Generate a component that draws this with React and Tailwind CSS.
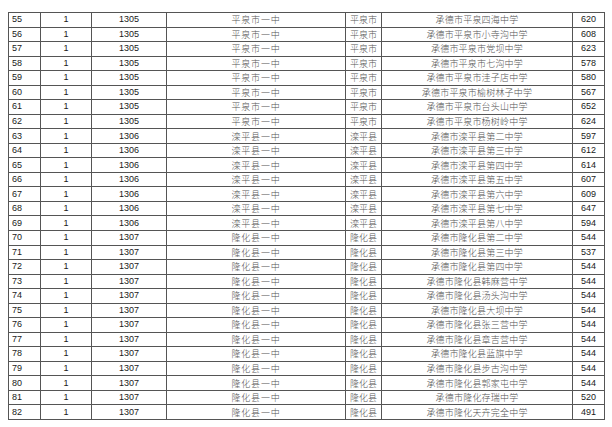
const groups = [
  { code: '1305', school: '平泉市一中', area: '平泉市', start: 55, rows: [
    ['承德市平泉四海中学', 620],
    ['承德市平泉市小寺沟中学', 608],
    ['承德市平泉市党坝中学', 623],
    ['承德市平泉市七沟中学', 578],
    ['承德市平泉市洼子店中学', 580],
    ['承德市平泉市榆树林子中学', 567],
    ['承德市平泉市台头山中学', 652],
    ['承德市平泉市杨树岭中学', 624],
  ] },
  { code: '1306', school: '滦平县一中', area: '滦平县', start: 63, rows: [
    ['承德市滦平县第二中学', 597],
    ['承德市滦平县第三中学', 612],
    ['承德市滦平县第四中学', 614],
    ['承德市滦平县第五中学', 607],
    ['承德市滦平县第六中学', 609],
    ['承德市滦平县第七中学', 647],
    ['承德市滦平县第八中学', 594],
  ] },
  { code: '1307', school: '隆化县一中', area: '隆化县', start: 70, rows: [
    ['承德市隆化县第二中学', 544],
    ['承德市隆化县第三中学', 537],
    ['承德市隆化县第四中学', 544],
    ['承德市隆化县韩麻营中学', 544],
    ['承德市隆化县汤头沟中学', 544],
    ['承德市隆化县大坝中学', 544],
    ['承德市隆化县张三营中学', 544],
    ['承德市隆化县章吉营中学', 544],
    ['承德市隆化县蓝旗中学', 544],
    ['承德市隆化县步古沟中学', 544],
    ['承德市隆化县郭家屯中学', 544],
    ['承德市隆化存瑞中学', 520],
    ['承德市隆化天卉完全中学', 491],
  ] },
];

const rows = groups.flatMap(g =>
  g.rows.map((r, i) => ({ no: g.start + i, code: g.code, school: g.school, area: g.area, mid: r[0], score: r[1] }))
);

const num = "font-['Liberation_Sans',sans-serif] text-[9px] text-[#1a1a1a]";
const cjk = "font-['Noto_Sans_CJK_SC',sans-serif] font-light text-[9px] text-[#555]";
const cell = 'border border-[#555] p-0 leading-none';

export default function App() {
  return (
    <div className="w-[612px] h-[427px] bg-white pt-[12px] pl-[8px]">
      <table className="border-collapse table-fixed w-[596px]">
        <colgroup>
          <col className="w-[32px]" />
          <col className="w-[51px]" />
          <col className="w-[75px]" />
          <col className="w-[179px]" />
          <col className="w-[36px]" />
          <col className="w-[191px]" />
          <col className="w-[32px]" />
        </colgroup>
        <tbody>
          {rows.map(r => (
            <tr key={r.no} className="h-[14.54px]">
              <td className={`${cell} ${num} text-left pl-[3px]`}>{r.no}</td>
              <td className={`${cell} ${num} text-center`}>1</td>
              <td className={`${cell} ${num} text-center`}>{r.code}</td>
              <td className={`${cell} ${cjk} text-center tracking-[0.8px]`}>{r.school}</td>
              <td className={`${cell} ${cjk} text-left pl-[4px]`}>{r.area}</td>
              <td className={`${cell} ${cjk} text-center tracking-[0.2px]`}>{r.mid}</td>
              <td className={`${cell} ${num} text-center`}>{r.score}</td>
            </tr>
          ))}
        </tbody>
      </table>
    </div>
  );
}
